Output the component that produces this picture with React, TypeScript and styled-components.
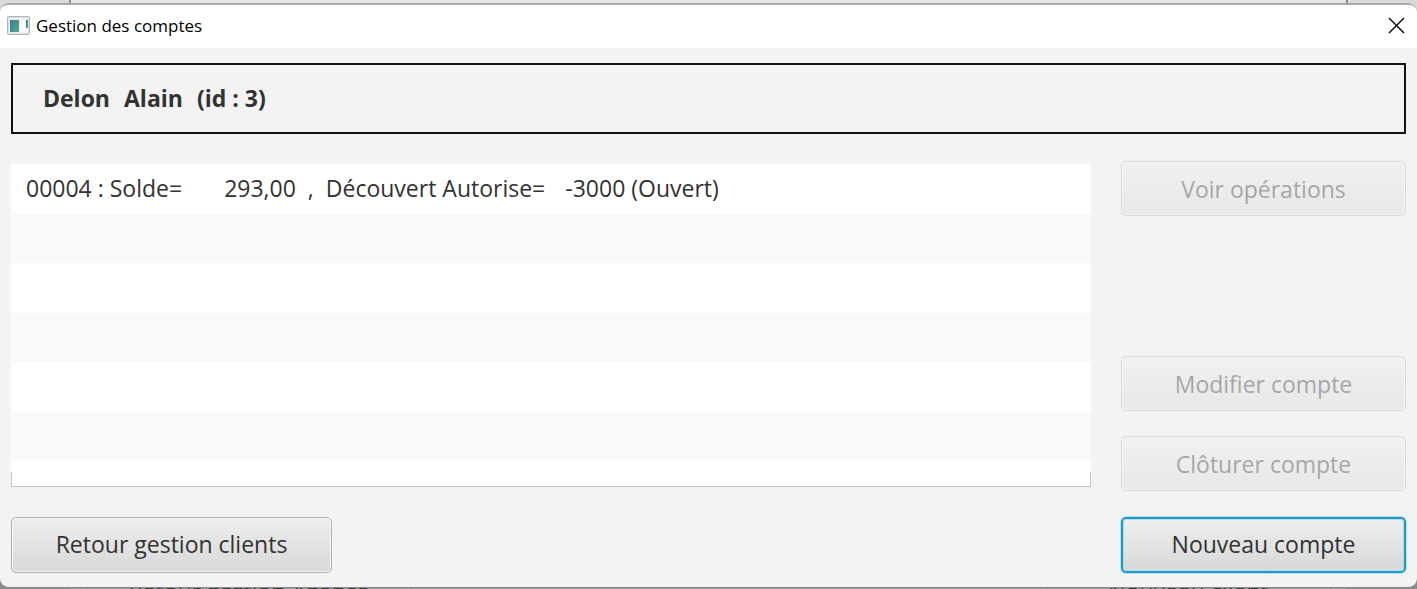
import React from "react";
import styled, { createGlobalStyle, css } from "styled-components";

const GlobalStyle = createGlobalStyle`
  * { box-sizing: border-box; }
  html, body { margin: 0; height: 100%; }
  body { font-family: "Open Sans", "Noto Sans", sans-serif; color: #323232; overflow: hidden; }
  #root { height: 100%; }
`;

const Desktop = styled.div`
  display: grid;
  grid-template: 100% / 100%;
  height: 100%;
  overflow: hidden;
  background: linear-gradient(#dadada 50%, #8c8c8c 50%);
`;

const Backdrop = styled.div`
  grid-area: 1 / 1;
  margin: 0 69px;
  display: flex;
  align-items: flex-end;
  justify-content: space-between;
  padding: 0 15px;
  border: 2px solid #8e8e8e;
  border-width: 0 2px;
  background: linear-gradient(#e6e6e6 50%, #989898 50%);
`;

const BackdropLabel = styled.span<{ $width: number }>`
  width: ${(p) => p.$width}px;
  height: 10px;
  line-height: 24px;
  font-size: 23px;
  text-align: center;
  white-space: nowrap;
  border: 1px solid #808080;
  border-width: 0 1px;
`;

const Dialog = styled.section`
  grid-area: 1 / 1;
  align-self: start;
  margin-top: 3px;
  border-top: 2px solid #a8a8a8;
  border-bottom: 1px solid #8a8a8a;
  border-radius: 9px;
  overflow: hidden;
  background: #f3f3f3;
`;

const TitleBar = styled.header`
  display: flex;
  align-items: center;
  height: 43px;
  padding: 0 12px 2px 7px;
  gap: 6px;
  background: #fff;
`;

const Title = styled.h1`
  flex: 1;
  margin: 0;
  font-size: 17px;
  line-height: 24px;
  font-weight: 400;
  color: #000;
`;

const CloseButton = styled.button`
  display: flex;
  padding: 0;
  border: 0;
  background: none;
`;

const Content = styled.main`
  padding: 15px 11px 14px;
`;

const ClientBanner = styled.h2`
  display: flex;
  gap: 14px;
  margin: 0 0 27px;
  padding: 0 30px;
  border: 2px solid #111;
  height: 71px;
  line-height: 66px;
  font-size: 23px;
  font-weight: 700;
`;

const Columns = styled.div`
  display: grid;
  grid-template-columns: 1fr 285px;
  column-gap: 30px;
`;

const AccountList = styled.ul`
  display: grid;
  grid-template-rows: repeat(3, 50px 49px) 25px;
  margin: 3px 0 4px;
  padding: 0;
  list-style: none;
  border-bottom: 1px solid #c4c4c4;
`;

const AccountRow = styled.li`
  display: flex;
  gap: 12px;
  padding: 0 15px;
  line-height: 48px;
  font-size: 23px;
  white-space: nowrap;
  background: #fff;
  &:nth-child(even) { background: #f9f9f9; }
  &:last-child {
    background:
      linear-gradient(#c4c4c4, #c4c4c4) left bottom / 1px 14px no-repeat,
      linear-gradient(#c4c4c4, #c4c4c4) right bottom / 1px 14px no-repeat,
      #fff;
  }
`;

const Balance = styled.span`
  padding-left: 30px;
`;

const Overdraft = styled.span`
  padding-left: 8px;
`;

const Actions = styled.div`
  display: flex;
  flex-direction: column;
  gap: 25px;
`;

const Spacer = styled.div`
  flex: 1;
`;

const Footer = styled.footer`
  display: flex;
  justify-content: space-between;
  margin-top: 26px;
`;

const Button = styled.button<{ $width: number; $focused?: boolean }>`
  width: ${(p) => p.$width}px;
  height: 56px;
  padding: 0 0 2px;
  border: 1px solid #b0b0b0;
  border-radius: 5px;
  background: linear-gradient(#eeeeee, #d8d8d8);
  box-shadow: inset 0 0 0 1px #f6f6f6;
  font-family: inherit;
  font-size: 23px;
  line-height: 32px;
  color: #323232;
  white-space: nowrap;

  &:disabled { height: 55px; padding: 0; opacity: 0.4; }

  ${(p) => p.$focused && css`
    border: 2px solid #1f9ac6;
    box-shadow: 0 0 0 1px #b3e4f5, inset 0 0 0 1px #b8dcea;
    outline: none;
  `}
`;

const AppIcon = () => (
  <svg width="23" height="19" viewBox="0 0 23 19" aria-hidden="true">
    <defs>
      <linearGradient id="pane" x1="0" y1="0" x2="1" y2="1">
        <stop offset="0" stopColor="#3c7a9c" />
        <stop offset="1" stopColor="#4fae84" />
      </linearGradient>
    </defs>
    <rect x="0.5" y="0.5" width="22" height="18" rx="1" fill="#eceef1" stroke="#b2b4ba" />
    <rect x="1.5" y="1.5" width="20" height="16" fill="none" stroke="#dcdee2" />
    <rect x="3" y="4" width="9" height="12" fill="url(#pane)" />
    <rect x="13" y="4" width="5" height="12" fill="#fafafa" />
    <rect x="19" y="4" width="2" height="8" fill="url(#pane)" />
    <rect x="19" y="12" width="2" height="4" fill="#fafafa" />
  </svg>
);

const CloseIcon = () => (
  <svg width="17" height="17" viewBox="0 0 17 17" aria-hidden="true">
    <path d="M1 1L16 16M16 1L1 16" stroke="#111" strokeWidth="1.5" fill="none" />
  </svg>
);

type Account = { id: string; balance: string; overdraft: string; state: string };

const accounts: Account[] = [
  { id: "00004", balance: "293,00", overdraft: "-3000", state: "Ouvert" },
];
const rows: (Account | undefined)[] = Array.from({ length: 7 }, (_, i) => accounts[i]);

export default function App() {
  return (
    <>
      <GlobalStyle />
      <Desktop>
        <Backdrop aria-hidden="true">
          <BackdropLabel $width={326}>Retour gestion Agence</BackdropLabel>
          <BackdropLabel $width={285}>Nouveau client</BackdropLabel>
        </Backdrop>
        <Dialog aria-label="Gestion des comptes">
          <TitleBar>
            <AppIcon />
            <Title>Gestion des comptes</Title>
            <CloseButton type="button" aria-label="Fermer"><CloseIcon /></CloseButton>
          </TitleBar>
          <Content>
            <ClientBanner>
              <span>Delon</span> <span>Alain</span> <span>(id : 3)</span>
            </ClientBanner>
            <Columns>
              <AccountList>
                {rows.map((account, i) => (
                  <AccountRow key={i}>
                    {account && (
                      <>
                        <span>{`${account.id} : Solde=`}</span>
                        <Balance>{account.balance}</Balance>
                        <span>,</span>
                        <span>Découvert Autorise=</span>
                        <Overdraft>{`${account.overdraft} (${account.state})`}</Overdraft>
                      </>
                    )}
                  </AccountRow>
                ))}
              </AccountList>
              <Actions>
                <Button type="button" $width={285} disabled>Voir opérations</Button>
                <Spacer />
                <Button type="button" $width={285} disabled>Modifier compte</Button>
                <Button type="button" $width={285} disabled>Clôturer compte</Button>
              </Actions>
            </Columns>
            <Footer>
              <Button type="button" $width={321}>Retour gestion clients</Button>
              <Button type="button" $width={285} $focused>Nouveau compte</Button>
            </Footer>
          </Content>
        </Dialog>
      </Desktop>
    </>
  );
}
